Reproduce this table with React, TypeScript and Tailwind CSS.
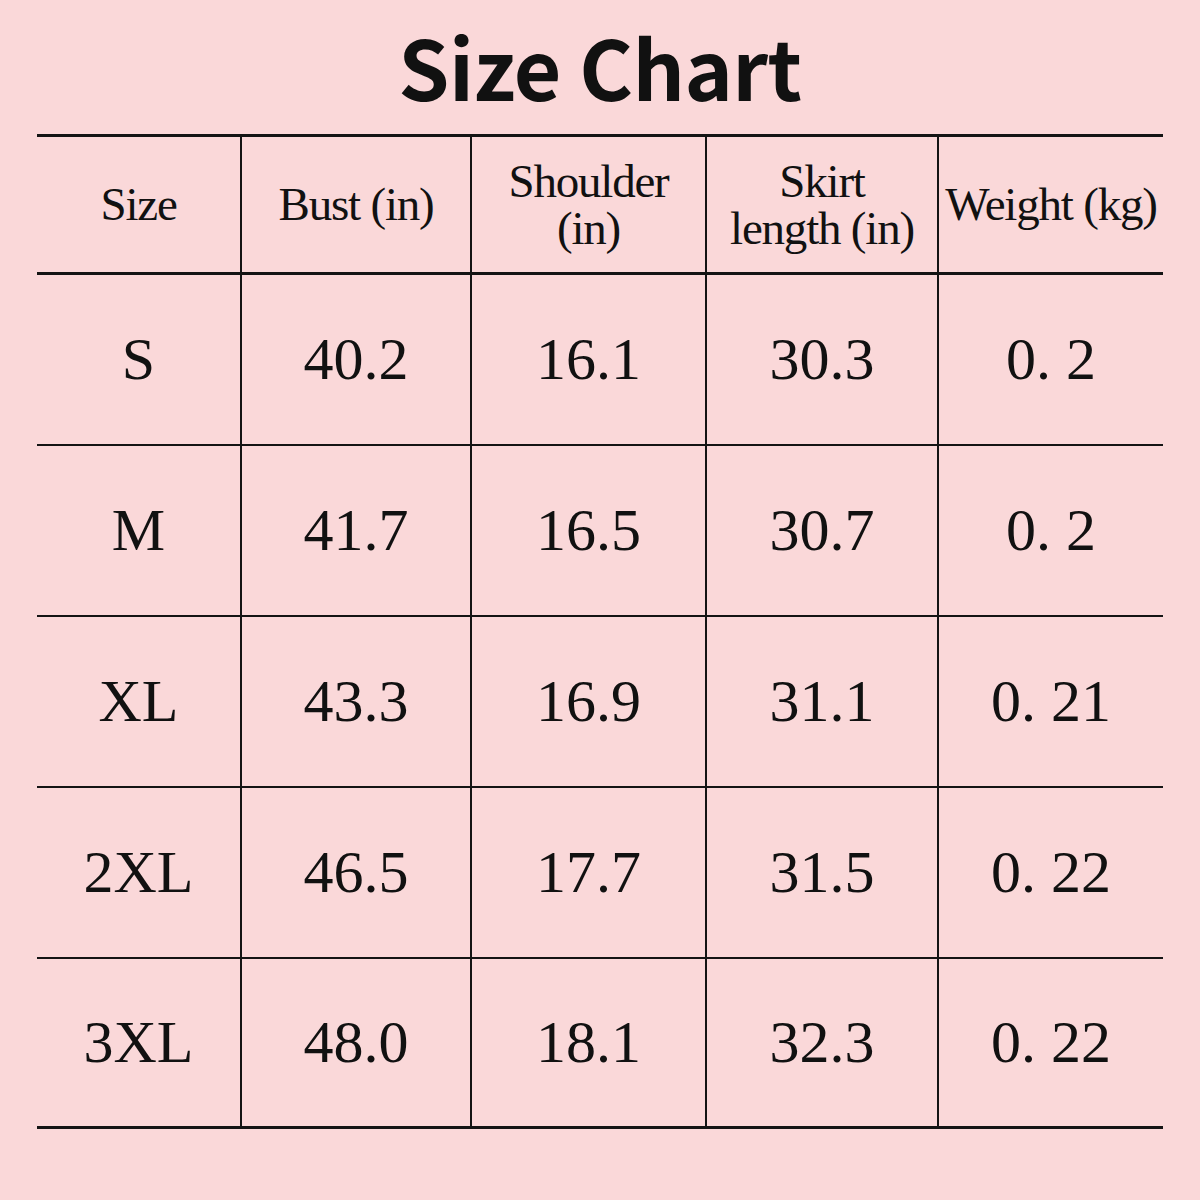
const headers = [
  ['Size'],
  ['Bust (in)'],
  ['Shoulder', '(in)'],
  ['Skirt', 'length (in)'],
  ['Weight (kg)'],
];

const rows = [
  ['S', '40.2', '16.1', '30.3', '0. 2'],
  ['M', '41.7', '16.5', '30.7', '0. 2'],
  ['XL', '43.3', '16.9', '31.1', '0. 21'],
  ['2XL', '46.5', '17.7', '31.5', '0. 22'],
  ['3XL', '48.0', '18.1', '32.3', '0. 22'],
];

const cols = 'grid grid-cols-[203px_230px_235px_232px_226px]';

export default function App() {
  return (
    <div className="w-[1200px] h-[1200px] bg-[#fad8d9] text-[#111] overflow-hidden">
      <div className="h-[134px] flex items-center justify-center pb-[2px]">
        <h1 className="text-[82px] font-bold leading-none tracking-[-0.5px] font-['Noto_Sans_CJK_SC','Noto_Sans',sans-serif]">
          Size Chart
        </h1>
      </div>

      <div className="ml-[37px] w-[1126px] border-t-[3px] border-[#141414]">
        {/* header */}
        <div className={`${cols} h-[138px] border-b-[3px] border-[#141414]`}>
          {headers.map((lines, i) => (
            <div
              key={i}
              className={`flex flex-col items-center justify-center text-[47px] leading-[47px] font-['Liberation_Serif',serif] ${i > 0 ? 'border-l-2 border-[#141414]' : ''}`}
            >
              {lines.map((l) => (
                <span key={l} className="whitespace-nowrap tracking-[-1.2px]">{l}</span>
              ))}
            </div>
          ))}
        </div>

        {/* body */}
        {rows.map((row, r) => (
          <div
            key={r}
            className={`${cols} ${r === rows.length - 1 ? 'h-[170px] border-b-[3px]' : 'h-[171px] border-b-2'} border-[#141414]`}
          >
            {row.map((v, i) => (
              <div
                key={i}
                className={`flex items-center justify-center text-[60px] leading-none font-['Liberation_Serif',serif] pb-[2px] ${i > 0 ? 'border-l-2 border-[#141414]' : ''}`}
              >
                {v}
              </div>
            ))}
          </div>
        ))}
      </div>
    </div>
  );
}
